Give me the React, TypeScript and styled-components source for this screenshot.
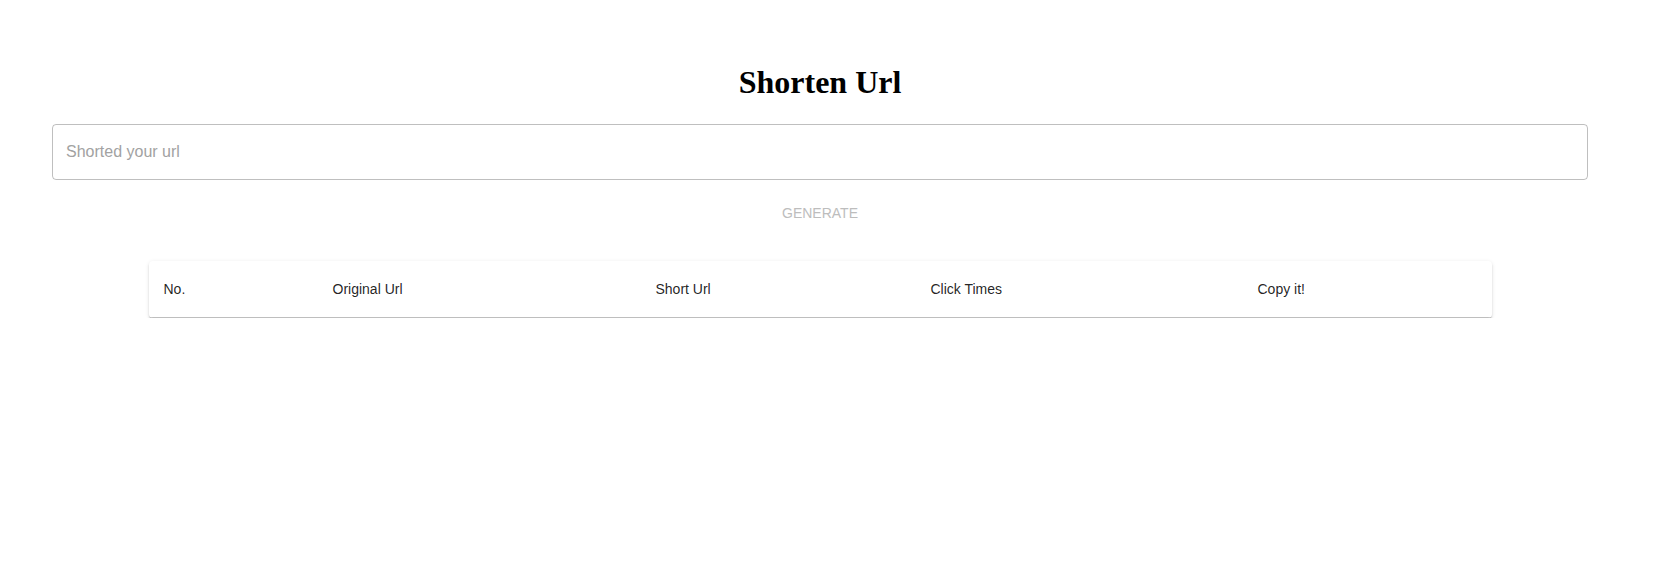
import React from "react";
import styled, { createGlobalStyle } from "styled-components";

const GlobalStyle = createGlobalStyle`
  html, body {
    margin: 0;
    padding: 0;
    background: #ffffff;
  }
  body {
    font-family: "Liberation Sans", Arial, sans-serif;
  }
`;

const Page = styled.div`
  width: 1640px;
  padding-top: 64px;
  display: flex;
  flex-direction: column;
  align-items: center;
`;

const Title = styled.h1`
  margin: 0;
  font-family: "Liberation Serif", "Times New Roman", serif;
  font-size: 32px;
  font-weight: 700;
  line-height: 37px;
  color: #000;
`;

const Field = styled.div`
  margin-top: 23px;
  width: 1536px;
  height: 56px;
  box-sizing: border-box;
  border: 1px solid rgba(0, 0, 0, 0.25);
  border-radius: 4px;
  display: flex;
  align-items: center;
`;

const Input = styled.input`
  flex: 1;
  border: none;
  outline: none;
  background: transparent;
  padding: 0 13px;
  height: 100%;
  font-family: "Liberation Sans", Arial, sans-serif;
  font-size: 16px;
  color: rgba(0, 0, 0, 0.87);
  &::placeholder {
    color: #a2a2a2;
    opacity: 1;
  }
`;

const Button = styled.button`
  margin-top: 15px;
  height: 36px;
  padding: 6px 8px;
  border: none;
  background: transparent;
  font-family: "Liberation Sans", Arial, sans-serif;
  font-size: 14px;
  line-height: 24px;
  text-transform: uppercase;
  color: #bdbdbd;
  cursor: default;
`;

const Paper = styled.div`
  margin-top: 30px;
  width: 1343px;
  border-radius: 4px;
  background: #fff;
  box-shadow: 0px 2px 1px -1px rgba(0, 0, 0, 0.38), 0px 2px 2px 0px rgba(0, 0, 0, 0.12),
    0px 1px 4px 0px rgba(0, 0, 0, 0.1);
  overflow: hidden;
`;

const Table = styled.table`
  width: 100%;
  border-collapse: collapse;
  table-layout: fixed;
`;

const Th = styled.th<{ $w: number }>`
  box-sizing: border-box;
  width: ${(p) => p.$w}px;
  padding: 16px 16px 16px 15px;
  text-align: left;
  font-family: "Liberation Sans", Arial, sans-serif;
  font-size: 14px;
  font-weight: 400;
  line-height: 24px;
  color: rgba(0, 0, 0, 0.87);
  border-bottom: 1px solid rgb(190, 190, 190);
`;

const columns: [string, number][] = [
  ["No.", 169],
  ["Original Url", 323],
  ["Short Url", 275],
  ["Click Times", 327],
  ["Copy it!", 249],
];

export default function App() {
  return (
    <>
      <GlobalStyle />
      <Page>
        <Title>Shorten Url</Title>
        <Field>
          <Input placeholder="Shorted your url" />
        </Field>
        <Button disabled>Generate</Button>
        <Paper>
          <Table>
            <thead>
              <tr>
                {columns.map(([label, w]) => (
                  <Th key={label} $w={w}>
                    {label}
                  </Th>
                ))}
              </tr>
            </thead>
          </Table>
        </Paper>
      </Page>
    </>
  );
}
